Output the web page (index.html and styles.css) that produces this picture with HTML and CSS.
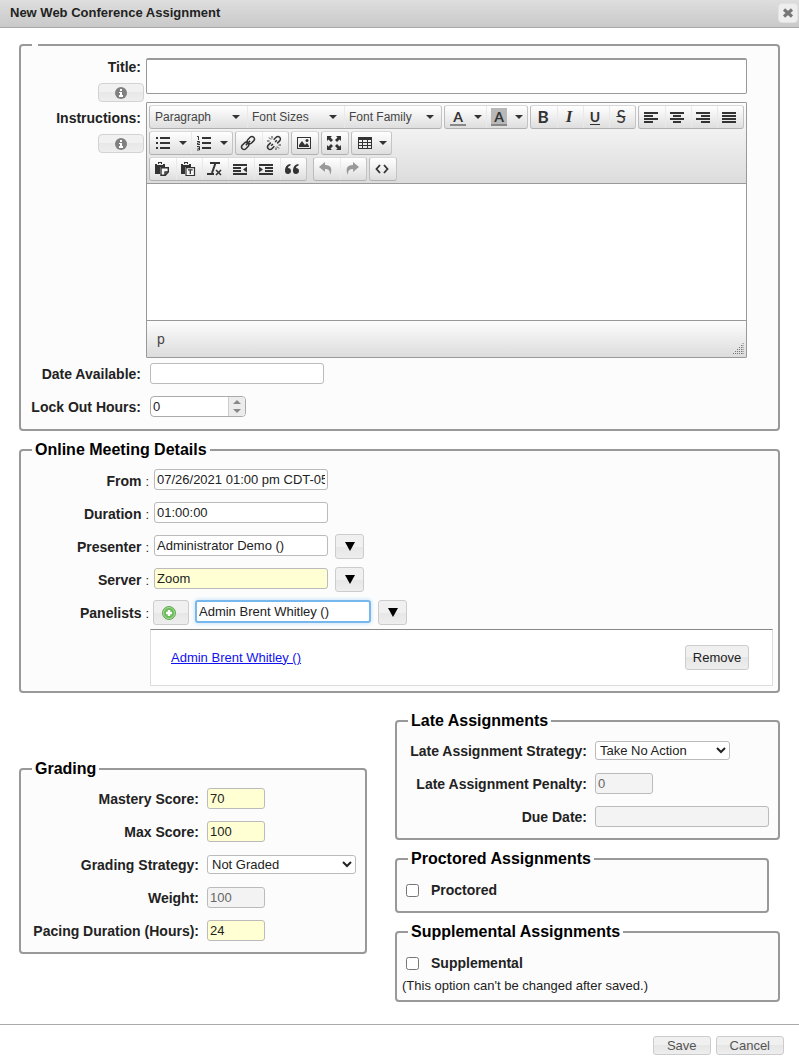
FILE: index.html
```html
<!DOCTYPE html>
<html lang="en">
<head>
<meta charset="utf-8">
<title>New Web Conference Assignment</title>
<link rel="stylesheet" href="styles.css">
</head>
<body>
<form class="dialog">
  <header class="dialog-header">
    <h1 class="dialog-title">New Web Conference Assignment</h1>
    <button type="button" class="close" aria-label="Close"><svg width="12" height="12" viewBox="0 0 12 12"><path d="M2 2.5l8 7M10 2.5l-8 7" stroke="#777" stroke-width="3.2"/></svg></button>
  </header>

  <main class="dialog-body">
    <fieldset class="panel">
      <legend class="legend"></legend>
      <div class="main-grid">
        <div class="label-cell">
          <label class="label" for="title">Title:</label>
          <button type="button" class="info" aria-label="About title"><svg width="12" height="12" viewBox="0 0 12 12"><circle cx="6" cy="6" r="6" fill="#808080"/><path d="M5 2h2v2H5zM4 5h3v3h1v2H4V8h1V6H4z" fill="#fff"/></svg></button>
        </div>
        <input class="title-input" id="title" type="text">

        <div class="label-cell label-cell-editor">
          <label class="label" for="instructions">Instructions:</label>
          <button type="button" class="info" aria-label="About instructions"><svg width="12" height="12" viewBox="0 0 12 12"><circle cx="6" cy="6" r="6" fill="#808080"/><path d="M5 2h2v2H5zM4 5h3v3h1v2H4V8h1V6H4z" fill="#fff"/></svg></button>
        </div>
        <div class="editor">
          <div class="toolbar">
            <div class="tool-row">
              <div class="group">
                <button type="button" class="tool menu">Paragraph<i class="caret"></i></button>
                <button type="button" class="tool menu">Font Sizes<i class="caret"></i></button>
                <button type="button" class="tool menu">Font Family<i class="caret"></i></button>
              </div>
              <div class="group">
                <button type="button" class="tool split" aria-label="Text color"><span class="swatch">A</span><i class="caret"></i></button>
                <button type="button" class="tool split" aria-label="Background color"><span class="swatch swatch-filled">A</span><i class="caret"></i></button>
              </div>
              <div class="group">
                <button type="button" class="tool glyph">B</button>
                <button type="button" class="tool glyph glyph-italic">I</button>
                <button type="button" class="tool glyph"><span class="glyph-under">U</span></button>
                <button type="button" class="tool glyph glyph-strike">S</button>
              </div>
              <div class="group">
                <button type="button" class="tool" aria-label="Align left"><svg width="16" height="14" viewBox="0 0 16 14"><path d="M1 3h14M1 6h9M1 9h14M1 12h9" class="line"/></svg></button>
                <button type="button" class="tool" aria-label="Align center"><svg width="16" height="14" viewBox="0 0 16 14"><path d="M1 3h14M4 6h8M1 9h14M4 12h8" class="line"/></svg></button>
                <button type="button" class="tool" aria-label="Align right"><svg width="16" height="14" viewBox="0 0 16 14"><path d="M1 3h14M6 6h9M1 9h14M6 12h9" class="line"/></svg></button>
                <button type="button" class="tool" aria-label="Justify"><svg width="16" height="14" viewBox="0 0 16 14"><path d="M1 3h14M1 6h14M1 9h14M1 12h14" class="line"/></svg></button>
              </div>
            </div>
            <div class="tool-row">
              <div class="group">
                <button type="button" class="tool split" aria-label="Bullet list"><svg width="16" height="16" viewBox="0 0 16 16"><path d="M5 3h10M5 8h10M5 13h10M1 3h2M1 8h2M1 13h2" class="line"/></svg><i class="caret"></i></button>
                <button type="button" class="tool split" aria-label="Numbered list"><svg width="16" height="16" viewBox="0 0 16 16"><path d="M6 3h9M6 8h9M6 13h9" class="line"/><path d="M1 1.5h1.5V5M1 6.500h2.500V8H1.500v1.500H4M1 11.500h2.500V15H1M1.500 13.300h2" class="thin"/></svg><i class="caret"></i></button>
              </div>
              <div class="group">
                <button type="button" class="tool" aria-label="Insert link"><svg width="16" height="16" viewBox="0 0 16 16"><g transform="rotate(-45 8 8)" class="link"><rect x="0" y="5.500" width="8" height="5" rx="2.500"/><rect x="8" y="5.500" width="8" height="5" rx="2.500"/><path d="M5 8h6"/></g></svg></button>
                <button type="button" class="tool" aria-label="Remove link"><svg width="16" height="16" viewBox="0 0 16 16"><g transform="rotate(-45 8 8)" class="link"><path d="M6 5.500H2.500a2.500 2.500 0 0 0 0 5H6M10 5.500h3.500a2.500 2.500 0 0 1 0 5H10M4 8h2.500M9.500 8H12"/></g><path d="M3 2.500l2 2M6 1v2.500M1 6h2.500M13 13.500l-2-2M10 15v-2.500M15 10h-2.500" class="thin"/></svg></button>
              </div>
              <div class="group">
                <button type="button" class="tool" aria-label="Insert image"><svg width="16" height="14" viewBox="0 0 16 14"><path fill-rule="evenodd" d="M1 1h14v12H1zM2 2v10h12V2z"/><path d="M3 11V9l3-4 3 4 2-2 2 3v1z"/><circle cx="11" cy="4.500" r="1.500"/></svg></button>
              </div>
              <div class="group">
                <button type="button" class="tool" aria-label="Full screen"><svg width="16" height="16" viewBox="0 0 16 16"><path d="M1 1h5L4.500 2.500 7 5 5 7 2.500 4.500 1 6zM15 1v5l-1.500-1.500L11 7 9 5l2.500-2.500L10 1zM15 15h-5l1.500-1.500L9 11l2-2 2.500 2.500L15 10zM1 15v-5l1.500 1.500L5 9l2 2-2.500 2.500L6 15z"/></svg></button>
              </div>
              <div class="group">
                <button type="button" class="tool split split-single" aria-label="Table"><svg width="16" height="14" viewBox="0 0 16 14"><path fill-rule="evenodd" d="M1 1h14v12H1zM2 4v2h3V4zM6 4v2h4V4zM11 4v2h3V4zM2 7v2h3V7zM6 7v2h4V7zM11 7v2h3V7zM2 10v2h3v-2zM6 10v2h4v-2zM11 10v2h3v-2z"/></svg><i class="caret"></i></button>
              </div>
            </div>
            <div class="tool-row">
              <div class="group">
                <button type="button" class="tool" aria-label="Paste"><svg width="16" height="16" viewBox="0 0 16 16"><path d="M1 3h3V1h4v2h3v3H6v7H1z"/><path d="M3 3.500h6M5 2.500h2" stroke="#eee"/><path d="M7 6.700h7.300v4.300l-3 3.300H7zM11 14v-3h3" fill="#f6f6f6" stroke="#333" stroke-width="1.400"/></svg></button>
                <button type="button" class="tool" aria-label="Paste as text"><svg width="16" height="16" viewBox="0 0 16 16"><path d="M1 3h3V1h4v2h3v3H5v7H1z"/><path d="M3 3.500h6M5 2.500h2" stroke="#eee"/><path d="M6 6.700h8.500v7.800H6z" fill="#f6f6f6" stroke="#333" stroke-width="1.200"/><path d="M8 8.800h4.600M10.300 9v4" stroke="#333" stroke-width="1.300"/></svg></button>
                <button type="button" class="tool" aria-label="Clear formatting"><svg width="16" height="16" viewBox="0 0 16 16"><path d="M4 2h10M9.500 2L6 12M1 13h7" stroke="#333" stroke-width="2"/><path d="M10 9l5 5M15 9l-5 5" stroke="#333" stroke-width="1.600"/></svg></button>
                <button type="button" class="tool" aria-label="Decrease indent"><svg width="16" height="14" viewBox="0 0 16 14"><path d="M1 3h14M1 6h8M1 9h8M1 12h14" class="line"/><path d="M15 4.500v6l-4-3z"/></svg></button>
                <button type="button" class="tool" aria-label="Increase indent"><svg width="16" height="14" viewBox="0 0 16 14"><path d="M1 3h14M7 6h8M7 9h8M1 12h14" class="line"/><path d="M1 4.500v6l4-3z"/></svg></button>
                <button type="button" class="tool" aria-label="Blockquote"><svg width="16" height="14" viewBox="0 0 16 14"><path d="M4 6a3 3 0 1 1-3 3.500C1 5 2.500 2.500 6.500 2v1.500C4.800 4 4 5 4 6zM12 6a3 3 0 1 1-3 3.500C9 5 10.500 2.500 14.500 2v1.500C12.800 4 12 5 12 6z"/></svg></button>
              </div>
              <div class="group group-apart">
                <button type="button" class="tool" aria-label="Undo" disabled><svg width="16" height="16" viewBox="0 0 16 16"><path d="M1 6l6-5v3c6 0 8 4 5 10 0-4-1-6-5-6v3z"/></svg></button>
                <button type="button" class="tool" aria-label="Redo" disabled><svg width="16" height="16" viewBox="0 0 16 16"><path d="M15 6L9 1v3c-6 0-8 4-5 10 0-4 1-6 5-6v3z"/></svg></button>
              </div>
              <div class="group">
                <button type="button" class="tool" aria-label="Source code"><svg width="16" height="16" viewBox="0 0 16 16"><path d="M6 4L2.500 8 6 12M10 4l3.500 4L10 12" fill="none" stroke="#333" stroke-width="1.800"/></svg></button>
              </div>
            </div>
          </div>
          <textarea class="editor-area" id="instructions"></textarea>
          <div class="status">p<svg class="grip" width="12" height="12" viewBox="0 0 12 12"><path d="M9.500 2v10M7.500 4v8M5.500 6v6M3.500 8v4M1.500 10v2M11 0v12" fill="none" stroke="#777" stroke-dasharray="1 1"/></svg></div>
        </div>

        <label class="label label-line label-date" for="available">Date Available:</label>
        <div class="date-cell"><input class="field" id="available" type="text"></div>

        <label class="label label-line label-lock" for="lockout">Lock Out Hours:</label>
        <div class="lock-cell">
          <div class="spinner">
            <input class="spinner-input" id="lockout" type="text" value="0">
            <div class="spinner-steps">
              <button type="button" class="step" aria-label="Increase"><svg width="8" height="4" viewBox="0 0 8 4"><path d="M0 4l4-4 4 4z"/></svg></button>
              <button type="button" class="step" aria-label="Decrease"><svg width="8" height="4" viewBox="0 0 8 4"><path d="M0 0l4 4 4-4z"/></svg></button>
            </div>
          </div>
        </div>
      </div>
    </fieldset>

    <fieldset class="panel meeting">
      <legend class="legend">Online Meeting Details</legend>
      <div class="meeting-body">
        <div class="meet-row">
          <label class="label meet-label" for="from">From <span class="colon">:</span></label>
          <input class="field" id="from" type="text" value="07/26/2021 01:00 pm CDT-05:00">
        </div>
        <div class="meet-row">
          <label class="label meet-label" for="duration">Duration <span class="colon">:</span></label>
          <input class="field" id="duration" type="text" value="01:00:00">
        </div>
        <div class="meet-row">
          <label class="label meet-label" for="presenter">Presenter <span class="colon">:</span></label>
          <input class="field" id="presenter" type="text" value="Administrator Demo ()">
          <button type="button" class="button drop" aria-label="Choose presenter"><svg width="10" height="9" viewBox="0 0 10 9"><path d="M0 0h10L5 9z"/></svg></button>
        </div>
        <div class="meet-row">
          <label class="label meet-label" for="server">Server <span class="colon">:</span></label>
          <input class="field required" id="server" type="text" value="Zoom">
          <button type="button" class="button drop" aria-label="Choose server"><svg width="10" height="9" viewBox="0 0 10 9"><path d="M0 0h10L5 9z"/></svg></button>
        </div>
        <div class="meet-row">
          <label class="label meet-label" for="panelists">Panelists <span class="colon">:</span></label>
          <button type="button" class="button add" aria-label="Add panelist"><svg width="16" height="16" viewBox="0 0 16 16"><circle cx="8" cy="8" r="6.500" fill="#6cbb5a" stroke="#68a95b"/><circle cx="8" cy="8" r="5.500" fill="none" stroke="#a4dc96"/><path d="M8 5v6M5 8h6" stroke="#fff" stroke-width="2.400"/></svg></button>
          <input class="field active" id="panelists" type="text" value="Admin Brent Whitley ()">
          <button type="button" class="button drop" aria-label="Choose panelist"><svg width="10" height="9" viewBox="0 0 10 9"><path d="M0 0h10L5 9z"/></svg></button>
        </div>
        <div class="people">
          <a class="person" href="#">Admin Brent Whitley ()</a>
          <button type="button" class="button remove">Remove</button>
        </div>
      </div>
    </fieldset>

    <div class="columns">
      <fieldset class="panel">
        <legend class="legend">Grading</legend>
        <div class="rows grading-rows">
          <label class="label" for="mastery">Mastery Score:</label>
          <input class="field short required" id="mastery" type="text" value="70">
          <label class="label" for="max">Max Score:</label>
          <input class="field short required" id="max" type="text" value="100">
          <label class="label" for="strategy">Grading Strategy:</label>
          <select class="select select-wide" id="strategy"><option>Not Graded</option></select>
          <label class="label" for="weight">Weight:</label>
          <input class="field short" id="weight" type="text" value="100" disabled>
          <label class="label" for="pacing">Pacing Duration (Hours):</label>
          <input class="field short required" id="pacing" type="text" value="24">
        </div>
      </fieldset>

      <div class="stack">
        <fieldset class="panel">
          <legend class="legend">Late Assignments</legend>
          <div class="rows late-rows">
            <label class="label" for="late">Late Assignment Strategy:</label>
            <select class="select" id="late"><option>Take No Action</option></select>
            <label class="label" for="penalty">Late Assignment Penalty:</label>
            <input class="field short" id="penalty" type="text" value="0" disabled>
            <label class="label" for="due">Due Date:</label>
            <input class="field" id="due" type="text" disabled>
          </div>
        </fieldset>
        <fieldset class="panel proctored">
          <legend class="legend">Proctored Assignments</legend>
          <div class="check-row"><input class="check" id="proctored" type="checkbox"><label class="label" for="proctored">Proctored</label></div>
        </fieldset>
        <fieldset class="panel supplemental">
          <legend class="legend">Supplemental Assignments</legend>
          <div class="check-row"><input class="check" id="supplemental" type="checkbox"><label class="label" for="supplemental">Supplemental</label></div>
          <p class="note">(This option can't be changed after saved.)</p>
        </fieldset>
      </div>
    </div>
  </main>

  <footer class="dialog-footer">
    <button type="button" class="button action">Save</button>
    <button type="button" class="button action">Cancel</button>
  </footer>
</form>
</body>
</html>
```
FILE: styles.css
```css
* {
  box-sizing: border-box;
}

body {
  margin: 0;
  background: #fff;
  color: #222;
  font: 13px/18px "Liberation Sans", Arial, sans-serif;
}

button,
input,
select,
textarea {
  margin: 0;
  font: inherit;
  color: inherit;
}

svg {
  display: block;
  flex: none;
}

.dialog-header {
  display: flex;
  align-items: center;
  justify-content: space-between;
  height: 28px;
  padding: 0 1px 2px 10px;
  border-bottom: 1px solid #aaa;
  background: linear-gradient(#dedede, #c9c9c9);
}

.dialog-title {
  margin: 0;
  font-size: 13px;
  line-height: 18px;
}

.close {
  display: flex;
  align-items: center;
  justify-content: center;
  width: 20px;
  height: 20px;
  padding: 0;
  border: 1px solid #e2e2e2;
  border-radius: 4px;
  background: #eee;
}

.dialog-body {
  padding: 16px 19px 0;
}

.panel {
  min-width: 0;
  margin: 0;
  padding: 0;
  border: 2px solid #999;
  border-radius: 4px;
  background: #fcfcfc;
}

.legend {
  margin-left: 11px;
  padding: 0 3px;
  color: #000;
  font-size: 16px;
  font-weight: bold;
  line-height: 18px;
}

.label {
  font-size: 14px;
  font-weight: bold;
  line-height: 18px;
  text-align: right;
  white-space: nowrap;
}

/* Title, editor and dates */

.main-grid {
  display: grid;
  grid-template-columns: 123px minmax(0, 1fr);
  column-gap: 2px;
  padding: 12px 31px 12px 0;
}

.label-cell {
  display: flex;
  flex-direction: column;
  align-items: flex-end;
  gap: 7px;
}

.label-cell .label,
.label-line {
  padding-right: 3px;
}

.label-cell-editor {
  padding-top: 7px;
}

.info {
  display: flex;
  align-items: center;
  justify-content: center;
  width: 46px;
  height: 19px;
  padding: 0;
  border: 1px solid #d3d3d3;
  border-radius: 4px;
  background: linear-gradient(#f1f1f1 50%, #e8e8e8 50%, #eee);
}

.title-input {
  width: 100%;
  height: 36px;
  margin-bottom: 8px;
  padding: 0 8px;
  border: 1px solid #999;
  border-top-width: 2px;
  border-radius: 2px;
  background: #fff;
}

.editor {
  border: 1px solid #999;
  border-radius: 1px;
}

.toolbar {
  display: flex;
  flex-direction: column;
  gap: 2px;
  padding: 2px;
  border-bottom: 1px solid #999;
  background: linear-gradient(#fdfdfd, #dcdcdc);
}

.tool-row {
  display: flex;
  flex-wrap: wrap;
  gap: 2px;
}

.group {
  display: flex;
  border: 1px solid #d0d0d0;
  border-color: #d8d8d8 #c4c4c4 #b0b0b0 #bcbcbc;
  border-radius: 3px;
  background: linear-gradient(#fff, #dedede);
}

.group-apart {
  margin-left: 4px;
}

.tool {
  display: flex;
  align-items: center;
  justify-content: center;
  width: 26px;
  height: 22px;
  padding: 0 2px 0 0;
  border: 0;
  background: none;
  color: #333;
  fill: #333;
}

.tool + .tool {
  box-shadow: inset 1px 0 #e9e9e9;
}

.tool:disabled {
  fill: #999;
}

.menu {
  justify-content: space-between;
  width: 97px;
  padding: 0 7px 0 5px;
  color: #444;
  font-size: 12px;
}

.split {
  justify-content: space-between;
  width: 41px;
  padding: 0 4px 0 5px;
}

.split-single {
  width: 39px;
}

.caret {
  border: 4px solid transparent;
  border-top-color: #333;
  border-bottom: 0;
}

.swatch {
  width: 16px;
  height: 18px;
  border-bottom: 2px solid #888;
  font: bold 14px/17px Lato, sans-serif;
}

.swatch-filled {
  background: #b8b8b8;
}

.glyph {
  font: bold 17px/20px Lato, sans-serif;
}

.glyph-italic {
  font-family: "Liberation Serif", serif;
  font-style: italic;
}

.glyph-under {
  height: 15px;
  border-bottom: 1px solid #333;
  font-size: 14px;
  line-height: 13px;
}

.glyph-strike {
  font-weight: normal;
  text-decoration: line-through;
}

.line {
  fill: none;
  stroke: #333;
  stroke-width: 2;
}

.thin {
  fill: none;
  stroke: #333;
  stroke-width: 1;
}

.link {
  fill: none;
  stroke: #333;
  stroke-width: 1.5;
}

.editor-area {
  display: block;
  width: 100%;
  height: 136px;
  padding: 8px;
  border: 0;
  background: #fff;
  resize: none;
}

.status {
  display: flex;
  align-items: center;
  justify-content: space-between;
  height: 37px;
  padding: 0 2px 0 10px;
  border-top: 1px solid #999;
  background: linear-gradient(#fdfdfd, #dcdcdc);
  color: #444;
  font-size: 14px;
}

.grip {
  align-self: flex-end;
  margin-bottom: 2px;
}

.field {
  width: 174px;
  height: 21px;
  padding: 0 2px;
  border: 1px solid #bbb;
  border-radius: 3px;
  background: #fff;
}

.field:disabled {
  background: #f3f3f3;
  color: #666;
}

.required {
  background: #ffffd3;
}

.short {
  width: 58px;
}

.date-cell {
  padding: 5px 0 12px 4px;
}

.lock-cell {
  padding-left: 4px;
}

.label-date {
  padding-top: 7px;
}

.label-lock {
  padding-top: 2px;
}

.spinner {
  display: flex;
  width: 96px;
  height: 21px;
  overflow: hidden;
  border: 1px solid #aaa;
  border-radius: 4px;
  background: #fff;
}

.spinner-input {
  flex: 1;
  min-width: 0;
  padding: 0 2px;
  border: 0;
  background: none;
}

.spinner-steps {
  display: flex;
  flex-direction: column;
  width: 17px;
  border-left: 1px solid #ccc;
}

.step {
  display: flex;
  flex: 1;
  align-items: center;
  justify-content: center;
  min-height: 0;
  padding: 0;
  border: 0;
  background: #ececec;
  fill: #888;
}

/* Online meeting */

.meeting {
  margin-top: 10px;
}

.meeting-body {
  padding: 9px 5px 5px 0;
}

.meet-row {
  display: flex;
  align-items: flex-start;
  height: 25px;
  margin-bottom: 8px;
}

.meet-row .field {
  margin-top: 1px;
}

.meet-label {
  width: 128px;
  margin-right: 5px;
  line-height: 26px;
}

.colon {
  font-size: 13px;
  font-weight: normal;
}

.button {
  display: flex;
  align-items: center;
  justify-content: center;
  padding: 0;
  border: 1px solid #ccc;
  border-radius: 3px;
  background: linear-gradient(#f0f0f0 50%, #e6e6e6 50%, #eee);
}

.drop {
  width: 29px;
  height: 25px;
  margin-left: 7px;
}

.add {
  width: 36px;
  height: 25px;
  padding-right: 4px;
  margin: 0 6px 0 -1px;
}

.meet-row .active {
  width: 176px;
  height: 23px;
  margin-top: 0;
  border: 2px solid #76b7ee;
  box-shadow: 0 0 4px #b9dcf8;
}

.people {
  display: flex;
  align-items: center;
  justify-content: space-between;
  height: 57px;
  margin: -4px 0 0 129px;
  padding: 0 23px 0 20px;
  border: 1px solid #ddd;
  border-top-color: #888;
  background: #fff;
}

.person {
  color: #11e;
}

.remove {
  width: 64px;
  height: 25px;
}

/* Lower panels */

.columns {
  display: grid;
  grid-template-columns: minmax(0, 348fr) minmax(0, 385fr);
  align-items: center;
  column-gap: 28px;
  margin-top: 19px;
}

.rows {
  display: grid;
  grid-auto-rows: 21px;
  align-items: center;
  gap: 12px 8px;
  padding: 10px 9px 11px 0;
}

.grading-rows {
  grid-template-columns: 178px minmax(0, 1fr);
}

.late-rows {
  grid-template-columns: 190px minmax(0, 1fr);
}

.select {
  width: 135px;
  height: 19px;
  padding: 0;
  border: 1px solid #bbb;
  border-radius: 3px;
  background: #fff;
  color: #222;
}

.select-wide {
  width: 149px;
}

.proctored {
  margin: 10px 11px 0 0;
  padding-bottom: 12px;
}

.supplemental {
  margin-top: 10px;
  padding-bottom: 5px;
}

.check-row {
  display: flex;
  align-items: center;
  gap: 12px;
  padding: 13px 9px 0;
}

.check {
  width: 13px;
  height: 13px;
  margin: 0;
}

.note {
  margin: 5px 5px 0;
}

.dialog-footer {
  display: flex;
  justify-content: flex-end;
  gap: 5px;
  margin-top: 22px;
  padding: 11px 15px 3px;
  border-top: 1px solid #aaa;
}

.action {
  height: 19px;
  padding: 0 13px;
  color: #555;
}
```
